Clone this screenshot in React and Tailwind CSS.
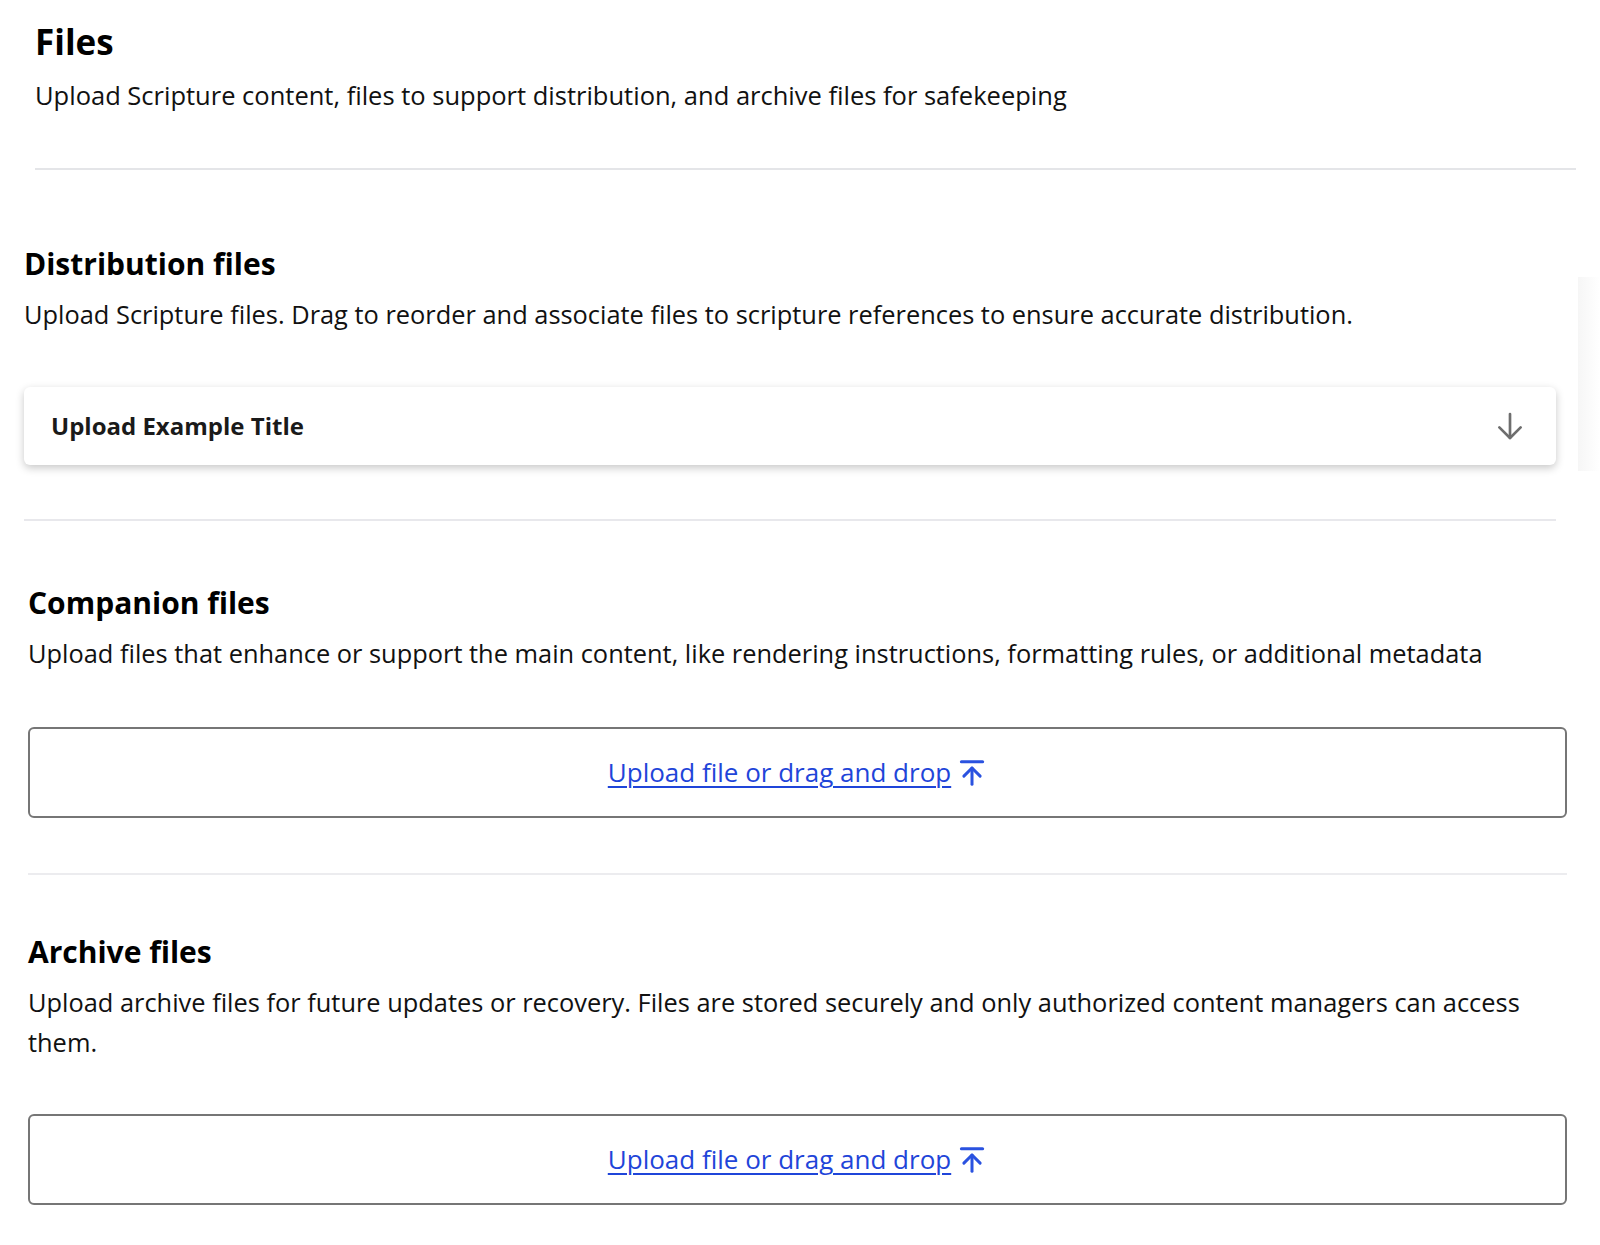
import React from 'react';

const ArrowUpToLine = ({ className }) => (
    <svg className={className} viewBox="0 0 24 24" fill="none" stroke="currentColor" strokeWidth={2.4} strokeLinecap="round" strokeLinejoin="round">
        <path d="M3.5 3h17" />
        <path d="M12 8v13" />
        <path d="M5.5 14.5L12 8l6.5 6.5" />
    </svg>
);

const ArrowDown = ({ className }) => (
    <svg className={className} viewBox="0 0 24 24" fill="none" stroke="currentColor" strokeWidth={2} strokeLinecap="round" strokeLinejoin="round">
        <path d="M12 3v18" />
        <path d="M4 13l8 8 8-8" />
    </svg>
);

const UploadBox = () => (
    <div className="h-[91px] rounded-md border-2 border-[#767676] bg-white flex items-center justify-center">
        <a href="#" className="flex items-center gap-[6px] text-[26px] text-[#1f45d9] underline underline-offset-[4px] decoration-[1.5px]">
            Upload file or drag and drop
            <ArrowUpToLine className="w-[30px] h-[30px] text-[#2a52e0]" />
        </a>
    </div>
);

const SectionHead = ({ title, children }) => (
    <>
        <h2 className="text-[30px] leading-[36px] font-bold text-black">{title}</h2>
        <p className="mt-[12px] text-[25.4px] leading-[40px] text-[#111]">{children}</p>
    </>
);

export default function App() {
    return (
        <div className="min-h-screen bg-white text-black font-['Open_Sans',sans-serif] pb-10">
            <div className="ml-[35px] w-[1541px] pt-[22px]">
                <h1 className="text-[35px] leading-[40px] font-bold">Files</h1>
                <p className="mt-[13px] text-[25.5px] leading-[40px] text-[#111]">
                    Upload Scripture content, files to support distribution, and archive files for safekeeping
                </p>
                <div className="mt-[53px] h-[2px] bg-[#e4e5e8]" />
            </div>

            <div className="flex">
                <div className="ml-[24px] w-[1532px]">
                    <section className="pt-[76px]">
                        <SectionHead title="Distribution files">
                            Upload Scripture files. Drag to reorder and associate files to scripture references to ensure accurate distribution.
                        </SectionHead>
                        <div className="mt-[53px] h-[78px] rounded-md bg-white shadow-[0_3px_8px_rgba(0,0,0,0.22)] flex items-center justify-between pl-[27px] pr-[30px]">
                            <span className="text-[24px] font-bold text-[#1a1a1a]">Upload Example Title</span>
                            <ArrowDown className="w-8 h-8 text-[#6e6e6e]" />
                        </div>
                        <div className="mt-[54px] h-[2px] bg-[#e8e8ec]" />
                    </section>
                </div>
                <div className="ml-[22px] flex-1 mt-[107px] h-[194px] bg-gradient-to-r from-[#f6f6f6] to-white" />
            </div>

            <div className="ml-[28px] w-[1539px]">
                <section className="pt-[64px]">
                    <SectionHead title="Companion files">
                        Upload files that enhance or support the main content, like rendering instructions, formatting rules, or additional metadata
                    </SectionHead>
                    <div className="mt-[54px]">
                        <UploadBox />
                    </div>
                    <div className="mt-[55px] h-[2px] bg-[#ececef]" />
                </section>

                <section className="pt-[59px]">
                    <SectionHead title="Archive files">
                        Upload archive files for future updates or recovery. Files are stored securely and only authorized content managers can access them.
                    </SectionHead>
                    <div className="mt-[52px]">
                        <UploadBox />
                    </div>
                </section>
            </div>
        </div>
    );
}
